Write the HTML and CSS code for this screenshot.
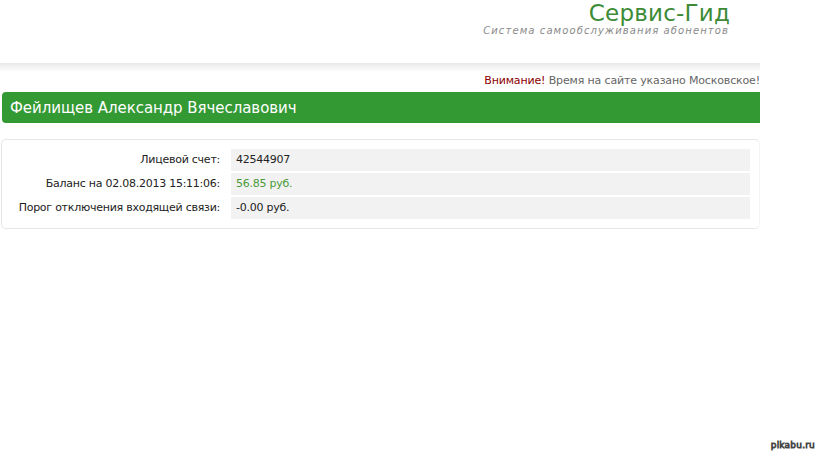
FILE: index.html
```html
<!DOCTYPE html>
<html lang="ru">
<head>
<meta charset="utf-8">
<link rel="stylesheet" href="styles.css">
</head>
<body>
<div class="page">
  <header class="header">
    <div class="brand">
      <div class="brand-title">Сервис-Гид</div>
      <div class="brand-sub">Система самообслуживания абонентов</div>
    </div>
  </header>
  <div class="shade"></div>
  <div class="notice"><span class="warn">Внимание!</span> Время на сайте указано Московское!</div>
  <div class="userbar">Фейлищев Александр Вячеславович</div>
  <div class="card">
    <div class="grid">
      <div class="label">Лицевой счет:</div>
      <div class="value">42544907</div>
      <div class="label">Баланс на 02.08.2013 15:11:06:</div>
      <div class="value green">56.85 руб.</div>
      <div class="label">Порог отключения входящей связи:</div>
      <div class="value">-0.00 руб.</div>
    </div>
  </div>
</div>
<div class="watermark">pikabu.ru</div>
</body>
</html>
```
FILE: styles.css
```css
html, body {
  margin: 0;
  padding: 0;
  background: #fff;
}
body {
  font-family: "DejaVu Sans", Verdana, sans-serif;
  color: #222;
  width: 819px;
  height: 460px;
  position: relative;
  overflow: hidden;
}
.page {
  width: 760px;
}
.header {
  height: 63px;
  display: flex;
  justify-content: flex-end;
}
.brand {
  padding-right: 30px;
  text-align: right;
}
.brand-title {
  font-family: "DejaVu Sans", sans-serif;
  font-size: 23px;
  line-height: 26px;
  color: #3d8b37;
  letter-spacing: 0.2px;
}
.brand-sub {
  font-family: "DejaVu Sans", sans-serif;
  font-style: italic;
  font-size: 10px;
  line-height: 10px;
  letter-spacing: 1.1px;
  color: #8a8a8a;
  margin-right: 1px;
}
.shade {
  height: 9px;
  background: linear-gradient(to bottom, #e9e9e9, #f6f6f6 60%, #ffffff);
}
.notice {
  text-align: right;
  font-size: 11px;
  letter-spacing: -0.15px;
  line-height: 17px;
  color: #666;
  height: 20px;
}
.warn {
  color: #8b0000;
}
.userbar {
  margin-left: 2px;
  height: 31px;
  background: #339933;
  border-radius: 4px 0 0 4px;
  color: #fff;
  font-size: 15px;
  letter-spacing: -0.05px;
  line-height: 33px;
  padding-left: 8px;
}
.card {
  margin-top: 16px;
  margin-left: 1px;
  border: 1px solid #e6e6e6;
  border-right-color: #f4f4f4;
  border-radius: 5px;
  height: 90px;
  box-sizing: border-box;
  padding: 9px 9px 0 0;
}
.grid {
  display: grid;
  grid-template-columns: 228px 1fr;
  column-gap: 1px;
  row-gap: 2px;
  font-size: 11px;
  letter-spacing: -0.25px;
}
.label {
  text-align: right;
  padding-right: 10px;
  line-height: 22px;
  color: #222;
}
.value {
  background: #f2f2f2;
  line-height: 22px;
  padding-left: 5px;
  color: #222;
}
.value.green {
  color: #4a9a3a;
}
.watermark {
  position: absolute;
  right: 4px;
  bottom: 10px;
  font-family: "DejaVu Sans", sans-serif;
  font-size: 9px;
  color: #fff;
  -webkit-text-stroke: 0.8px #444;
  letter-spacing: 0.2px;
}
```
